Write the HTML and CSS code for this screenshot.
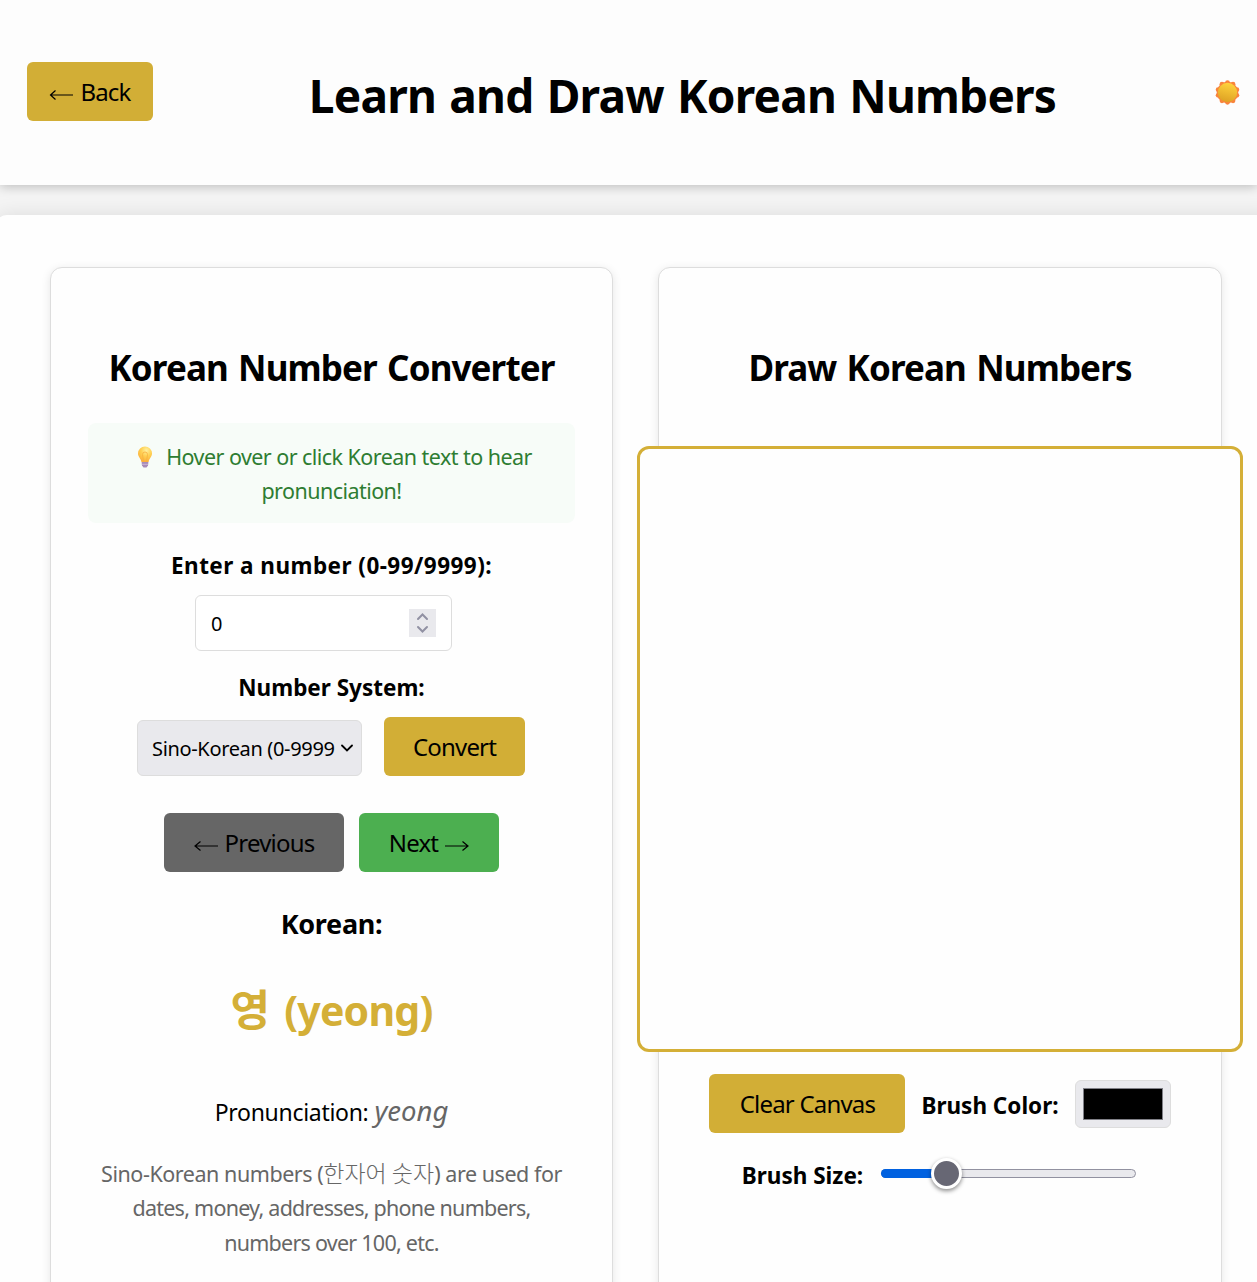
FILE: index.html
```html
<!DOCTYPE html>
<html lang="en">
<head>
<meta charset="utf-8">
<title>Learn and Draw Korean Numbers</title>
<link rel="stylesheet" href="styles.css">
</head>
<body>
<header class="header">
  <button class="btn btn-back"><svg class="arrow" viewBox="0 0 24 12"><path d="M6.500 1.500L1.500 6l5 4.500M1.500 6H24"/></svg><span>Back</span></button>
  <h1 class="title">Learn and Draw Korean Numbers</h1>
  <svg class="sun" viewBox="0 0 24 24">
    <defs>
      <linearGradient id="disc" x1=".6" y1="0" x2=".35" y2="1"><stop offset="0" stop-color="#ffd33c"/><stop offset="1" stop-color="#dda023"/></linearGradient>
    </defs>
    <g fill="#f9843b"><circle cx="12" cy="12" r="10.300"/><circle cx="12" cy="2.600" r="2.300"/><circle cx="17.300" cy="4" r="2.300"/><circle cx="21" cy="9.300" r="2.300"/><circle cx="21" cy="14.700" r="2.300"/><circle cx="17.300" cy="20" r="2.300"/><circle cx="12" cy="21.400" r="2.300"/><circle cx="6.700" cy="20" r="2.300"/><circle cx="3" cy="14.700" r="2.300"/><circle cx="3" cy="9.300" r="2.300"/><circle cx="6.700" cy="4" r="2.300"/></g>
    <circle cx="12" cy="12" r="9.300" fill="url(#disc)"/>
  </svg>
</header>
<main class="main">
  <section class="card">
    <h2 class="heading heading-converter">Korean Number Converter</h2>
    <div class="hint">
      <p class="hint-line hint-first"><svg class="bulb" viewBox="0 0 16 22">
        <defs><radialGradient id="glass" cx=".6" cy=".25" r=".75"><stop offset="0" stop-color="#fff0a0"/><stop offset=".5" stop-color="#ffd052"/><stop offset="1" stop-color="#fbb03c"/></radialGradient></defs>
        <path d="M8 .5a7 7 0 0 1 7 7c0 3.500-3 5-3.400 8.500H4.400C4 12.500 1 11 1 7.500a7 7 0 0 1 7-7z" fill="url(#glass)"/>
        <path d="M6.500 15.500L5.500 8.500a2.500 2.500 0 0 1 5 0l-1 7" fill="none" stroke="#f8b03f" stroke-width=".8"/>
        <path d="M4.600 16h6.800l-.4 3.500-1.500 2h-3L5 19.500z" fill="#a78bb8"/><path d="M4.800 18.300h6.400" stroke="#d3c0dc" stroke-width=".8"/>
      </svg><span>Hover over or click Korean text to hear</span></p>
      <p class="hint-line">pronunciation!</p>
    </div>
    <label class="label label-number">Enter a number (0-99/9999):</label>
    <div class="number">
      <span>0</span>
      <span class="spinner"><svg viewBox="0 0 27 28"><path d="M9 10l4.500-4.500L18 10M9 18l4.500 4.500L18 18"/></svg></span>
    </div>
    <label class="label label-system">Number System:</label>
    <div class="row row-convert">
      <div class="select"><span class="select-text">Sino-Korean (0-9999)</span><svg class="chevron" viewBox="0 0 12 8"><path d="M1 1.500l5 5 5-5"/></svg></div>
      <button class="btn btn-convert">Convert</button>
    </div>
    <div class="row row-nav">
      <button class="btn btn-prev"><svg class="arrow" viewBox="0 0 24 12"><path d="M6.500 1.500L1 6l5.500 4.500M1 6h23"/></svg><span>Previous</span></button>
      <button class="btn btn-next"><span>Next</span><svg class="arrow" viewBox="0 0 24 12"><path d="M17.500 1.500L23 6l-5.500 4.500M23 6H0"/></svg></button>
    </div>
    <h3 class="subheading">Korean:</h3>
    <div class="result"><span class="hangul">영</span><span>(yeong)</span></div>
    <p class="pron"><span class="pron-label">Pronunciation:</span><em class="pron-value">yeong</em></p>
    <div class="note">
      <p class="note-lead">Sino-Korean numbers (<span class="note-ko">한자어 숫자</span>) are used for</p>
      <p>dates, money, addresses, phone numbers,</p>
      <p>numbers over 100, etc.</p>
    </div>
  </section>
  <section class="card">
    <h2 class="heading heading-draw">Draw Korean Numbers</h2>
    <canvas class="board" width="600" height="600"></canvas>
    <div class="row row-clear">
      <button class="btn btn-clear">Clear Canvas</button>
      <label class="label label-color">Brush Color:</label>
      <div class="color"><div class="swatch"></div></div>
    </div>
    <div class="row row-size">
      <label class="label label-size">Brush Size:</label>
      <div class="range"><div class="range-fill"></div><div class="thumb"></div></div>
    </div>
  </section>
</main>
</body>
</html>
```
FILE: styles.css
```css
* { box-sizing: border-box; }
html, body { height: 100%; }
body {
  margin: 0;
  overflow: hidden;
  background: #f4f4f4;
  color: #000;
  font-family: "Noto Sans", "Noto Sans CJK KR", sans-serif;
}
h1, h2, h3, p { margin: 0; }
h1, h2, h3, p, label, span { white-space: nowrap; }

.header {
  height: 185px;
  padding: 0 17px 0 27px;
  display: flex;
  align-items: flex-start;
  justify-content: space-between;
  background: #fdfdfd;
  box-shadow: 0 2px 10px rgba(0, 0, 0, .22);
}
.title { margin: 60px 3px 0 0; font-size: 46px; line-height: 70px; letter-spacing: -.780px; word-spacing: 2px; }
.sun { width: 25px; height: 25px; margin-top: 80px; }

.btn {
  height: 59px;
  flex: none;
  display: flex;
  align-items: center;
  justify-content: center;
  gap: 7px;
  padding: 1px 0 0;
  border: 0;
  border-radius: 6px;
  background: #d2ae36;
  color: #000;
  font: 24px/34px "Noto Sans", sans-serif;
  letter-spacing: -.8px;
}
.arrow { width: 24px; height: 12px; margin-top: 5px; fill: none; stroke: currentColor; stroke-width: 1.2; }
.btn-back { width: 126px; margin-top: 62px; }
.btn-convert { width: 141px; }
.btn-prev { width: 180px; background: #666; }
.btn-next { width: 140px; background: #4caf50; }
.btn-clear { width: 196px; }

.main {
  height: 1120px;
  margin: 30px -20px 0 -5px;
  padding: 52px 55px 0;
  display: flex;
  align-items: flex-start;
  gap: 45px;
  border-radius: 12px;
  background: #fefefe;
  box-shadow: 0 0 20px rgba(0, 0, 0, .1);
}
.card {
  width: 563px;
  height: 1060px;
  flex: none;
  padding: 70px 0 0;
  display: flex;
  flex-direction: column;
  align-items: center;
  border: 1px solid #ddd;
  border-radius: 12px;
  background: #fefefe;
  box-shadow: 0 2px 10px rgba(0, 0, 0, .1);
}
.card + .card { width: 564px; }
.heading { font-size: 35px; line-height: 60px; letter-spacing: -.880px; word-spacing: 2px; }

.hint {
  width: 487px;
  height: 100px;
  margin-top: 25px;
  padding: 17px 0 0;
  border-radius: 8px;
  background: #f7fcf8;
  color: #2e7d32;
  font-size: 21.500px;
  line-height: 34px;
}
.hint-line { display: flex; align-items: center; justify-content: center; letter-spacing: -.550px; }
.hint-first { padding-left: 6px; }
.bulb { width: 16px; height: 22px; margin-right: 13px; }

.label { font-size: 22.500px; line-height: 34px; font-weight: 700; }
.label-number { margin-top: 26px; letter-spacing: .460px; }
.number {
  width: 257px;
  height: 56px;
  margin: 12px 16px 0 0;
  padding: 0 15px;
  display: flex;
  align-items: center;
  justify-content: space-between;
  border: 1px solid #ddd;
  border-radius: 6px;
  background: #fff;
  font-size: 20px;
}
.spinner { width: 27px; height: 28px; display: flex; background: #e9e9ed; }
.spinner svg { width: 27px; height: 28px; fill: none; stroke: #9191a3; stroke-width: 2; stroke-linecap: round; }
.label-system { margin-top: 20px; }

.row { flex: none; display: flex; }
.row-convert { height: 59px; margin: 12px 1px 0 0; gap: 22px; align-items: flex-end; }
.select {
  width: 225px;
  height: 56px;
  padding: 0 8px 0 14px;
  display: flex;
  align-items: center;
  justify-content: space-between;
  border: 1px solid #ddd;
  border-radius: 6px;
  background: #e9e9ed;
  font-size: 20px;
}
.select-text { width: 183px; overflow: hidden; letter-spacing: -.340px; }
.chevron { width: 12px; height: 8px; fill: none; stroke: #000; stroke-width: 1.8; stroke-linecap: round; }
.row-nav { height: 59px; margin-top: 37px; gap: 15px; }

.subheading { margin-top: 32px; font-size: 27px; line-height: 40px; letter-spacing: -.3px; }
.result { height: 60px; margin-top: 36px; display: flex; gap: 15px; color: #d4af37; font-size: 41px; line-height: 60px; font-weight: 700; letter-spacing: -.8px; }
.hangul { margin-top: -3px; font-family: "Noto Sans CJK KR", sans-serif; font-size: 43px; }
.pron { height: 40px; margin-top: 51px; display: flex; align-items: baseline; gap: 6px; line-height: 40px; }
.pron-label { font-size: 23px; letter-spacing: -.300px; }
.pron-value { color: #666; font-size: 27.500px; }
.note { margin-top: 25.500px; color: #666; font-size: 21.500px; line-height: 34.500px; letter-spacing: -.750px; text-align: center; }
.note p { height: 34.500px; }
.note .note-lead { letter-spacing: -.450px; }
.note-ko { font-family: "Noto Sans CJK KR", sans-serif; font-size: 23px; font-weight: 300; line-height: 1; letter-spacing: 0; }

.board {
  width: 606px;
  height: 606px;
  flex: none;
  margin-top: 48px;
  border: 3px solid #d4af37;
  border-radius: 12px;
  background: #fefefe;
}
.row-clear { height: 59px; margin-top: 22px; gap: 16px; align-items: center; }
.label-color { margin-top: 5px; }
.color { width: 96px; height: 48px; margin-bottom: -1px; padding: 7px; border: 1px solid #ddd; border-radius: 6px; background: #e9e9ed; }
.swatch { width: 80px; height: 32px; border: 1px solid #808087; background: #000; }
.row-size { height: 34px; margin-top: 26px; margin-right: 2px; gap: 18px; align-items: center; }
.range { position: relative; width: 255px; height: 9px; margin-top: -5px; border: 1px solid #9191a0; border-radius: 5px; background: #e9e9ed; }
.range-fill { width: 65px; height: 9px; margin: -1px; border-radius: 5px 0 0 5px; background: #0061e0; }
.thumb { position: absolute; left: 49px; top: -12px; width: 31px; height: 31px; border: 3px solid #fff; border-radius: 50%; background: #676774; box-shadow: 0 2px 4px rgba(0, 0, 0, .45); }
```
